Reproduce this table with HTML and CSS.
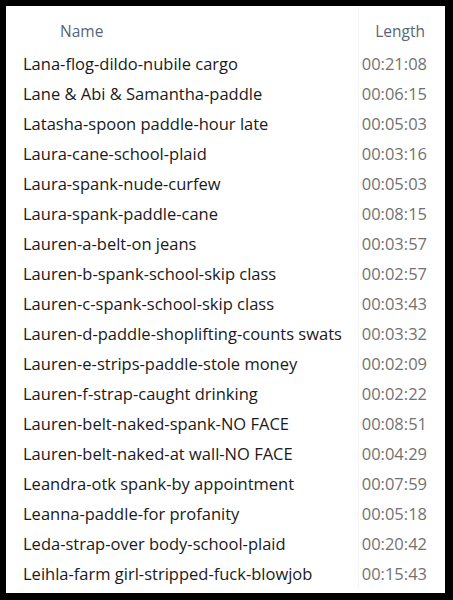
FILE: index.html
```html
<!DOCTYPE html>
<html lang="en">
<head>
    <meta charset="UTF-8">
    <title>Videos</title>
    <link rel="stylesheet" href="styles.css">
</head>
<body>
    <div class="panel">
        <div class="list">
            <div class="head name">Name</div>
            <div class="head len">Length</div>

            <div class="name">Lana-flog-dildo-nubile cargo</div><div class="len">00:21:08</div>
            <div class="name">Lane &amp; Abi &amp; Samantha-paddle</div><div class="len">00:06:15</div>
            <div class="name">Latasha-spoon paddle-hour late</div><div class="len">00:05:03</div>
            <div class="name">Laura-cane-school-plaid</div><div class="len">00:03:16</div>
            <div class="name">Laura-spank-nude-curfew</div><div class="len">00:05:03</div>
            <div class="name">Laura-spank-paddle-cane</div><div class="len">00:08:15</div>
            <div class="name">Lauren-a-belt-on jeans</div><div class="len">00:03:57</div>
            <div class="name">Lauren-b-spank-school-skip class</div><div class="len">00:02:57</div>
            <div class="name">Lauren-c-spank-school-skip class</div><div class="len">00:03:43</div>
            <div class="name">Lauren-d-paddle-shoplifting-counts swats</div><div class="len">00:03:32</div>
            <div class="name">Lauren-e-strips-paddle-stole money</div><div class="len">00:02:09</div>
            <div class="name">Lauren-f-strap-caught drinking</div><div class="len">00:02:22</div>
            <div class="name">Lauren-belt-naked-spank-NO FACE</div><div class="len">00:08:51</div>
            <div class="name">Lauren-belt-naked-at wall-NO FACE</div><div class="len">00:04:29</div>
            <div class="name">Leandra-otk spank-by appointment</div><div class="len">00:07:59</div>
            <div class="name">Leanna-paddle-for profanity</div><div class="len">00:05:18</div>
            <div class="name">Leda-strap-over body-school-plaid</div><div class="len">00:20:42</div>
            <div class="name">Leihla-farm girl-stripped-fuck-blowjob</div><div class="len">00:15:43</div>
        </div>
    </div>
</body>
</html>
```

FILE: styles.css
```css
body {
    margin: 0;
    background-color: #000;
    font-family: "Open Sans", "Noto Sans", sans-serif;
}
.panel {
    margin: 6px 8px 7px 6px;
    height: 587px;
    background-color: #fff;
}
.list {
    display: grid;
    grid-template-columns: 352px 1fr;
    grid-template-rows: 42px;
    grid-auto-rows: 30px;
}
.list > div {
    display: flex;
    align-items: center;
    font-size: 16.5px;
    white-space: nowrap;
}
.name {
    padding-left: 17px;
    color: #1a1a1a;
    font-weight: 500;
}
.len {
    justify-content: flex-end;
    padding-right: 18px;
    color: #727272;
    font-size: 14.5px;
    border-left: 1px solid #f4f4f4;
}
.list .head {
    padding-top: 8px;
    color: #586579;
    font-weight: 400;
    font-size: 15.5px;
}
.head.len {
    padding-right: 20px;
}
.head.name {
    padding-left: 54px;
}
```
